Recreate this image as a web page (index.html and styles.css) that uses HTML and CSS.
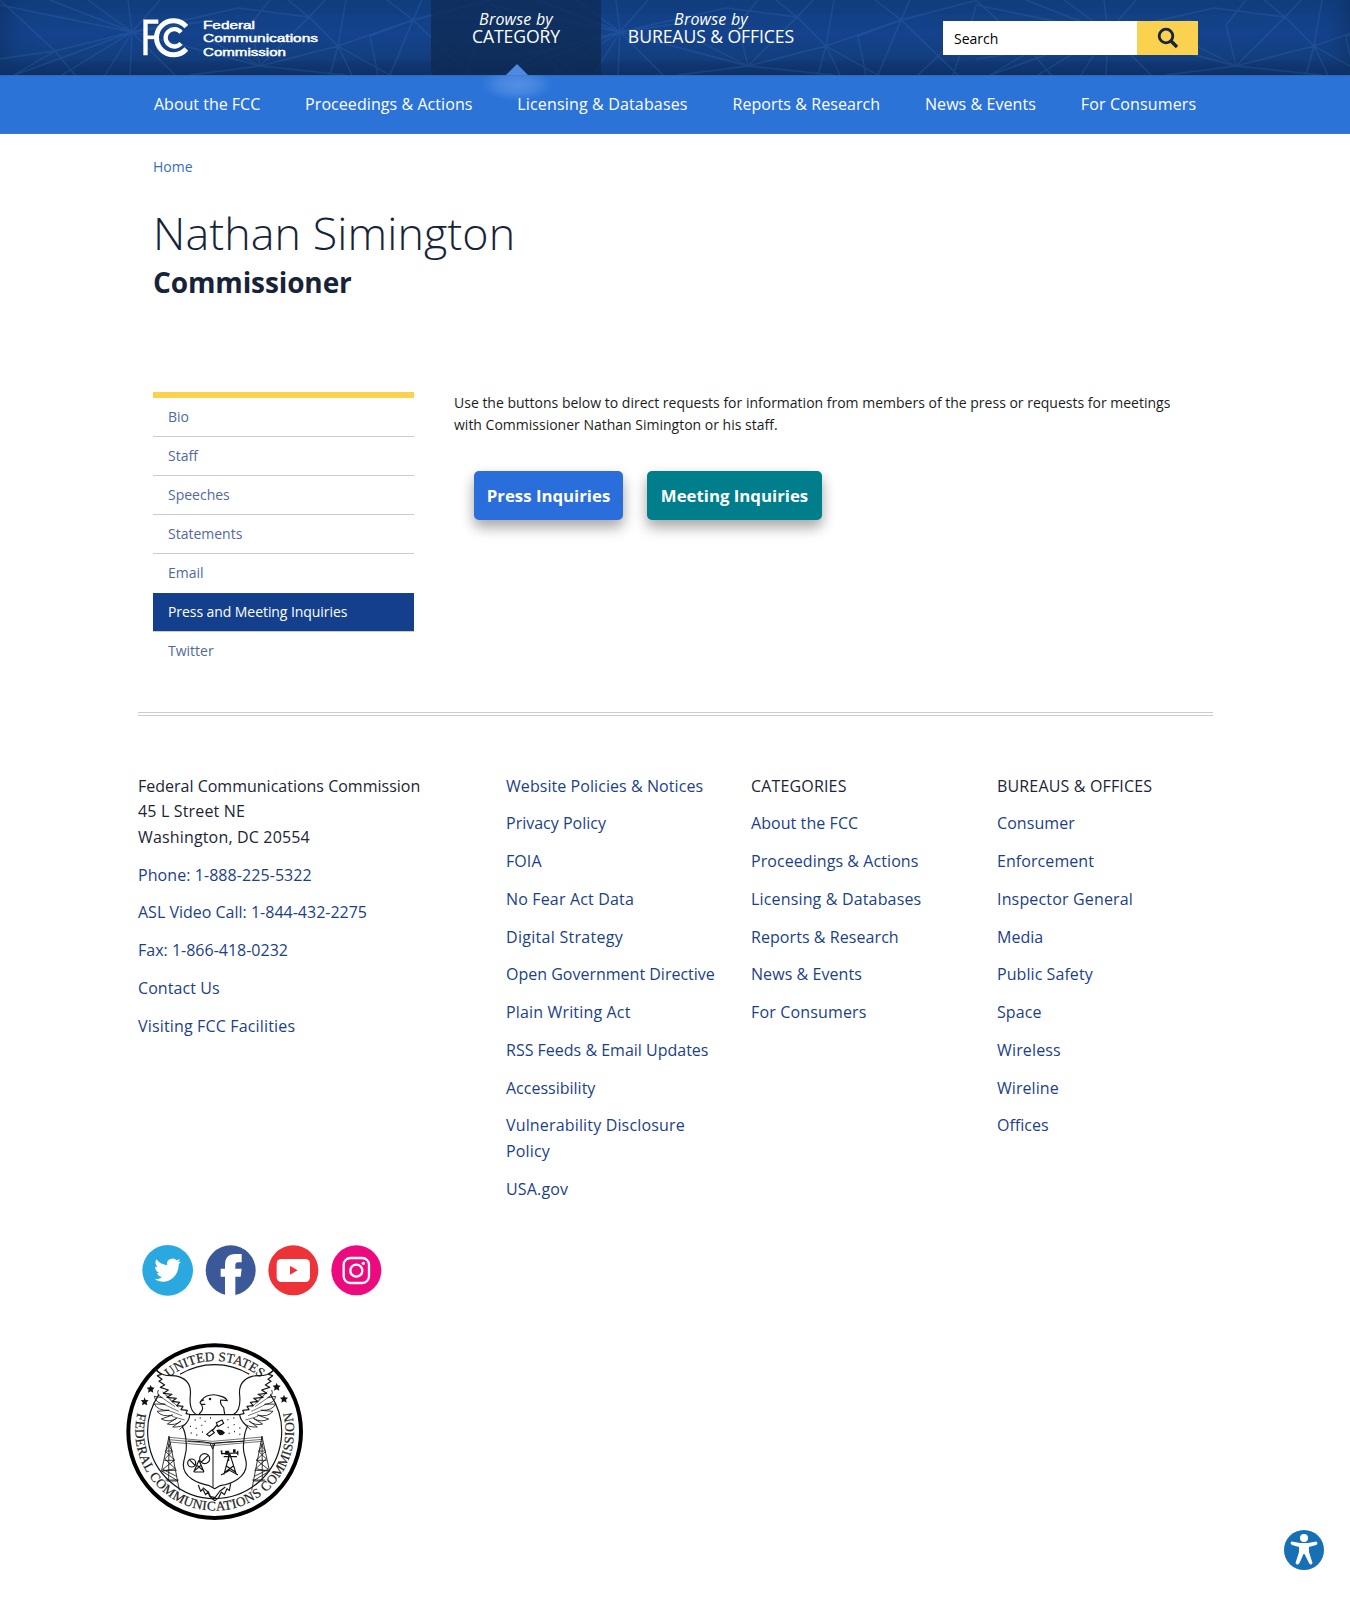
FILE: index.html
```
<!DOCTYPE html>
<html lang="en">
<head>
<meta charset="utf-8">
<title>Nathan Simington | Federal Communications Commission</title>
<link rel="stylesheet" href="styles.css">
</head>
<body>
<header class="masthead">
  <svg class="mesh" width="1350" height="75" aria-hidden="true">
    <defs>
      <pattern id="web" width="488" height="75" patternUnits="userSpaceOnUse">
        <path d="M132 32L0 5M132 32L55 51L-8 60M132 32L50 0M132 32L88 0M132 32L128 0M132 32L160 0M132 32L15 75M132 32L62 75M132 32L105 75M132 32L130 75M132 32L175 75M132 32L260 66M132 32L238 8L309 17M132 32L215 20M0 0L55 51L75 75M55 51L14 75M260 66L190 75M260 66L205 38M260 66L250 25L270 0M260 66L309 17L288 0M260 66L338 46M260 66L345 75M309 17L325 0M309 17L338 46L413 20L490 0M338 46L330 75M338 46L352 75M338 46L346 0M338 46L390 75M413 20L387 0M413 20L422 0M413 20L390 75M413 20L370 36L378 75M413 20L470 75M490 0L482 26L430 75M482 26L465 75" fill="none" stroke="#4c8bd0" stroke-width="1.4" opacity=".17"/>
      </pattern>
    </defs>
    <rect width="1350" height="75" fill="url(#web)"/>
  </svg>
  <div class="masthead-inner">
    <svg class="logo" width="184" height="60" viewBox="410 0 552 180" role="img" aria-label="FCC">
      <g fill="none" stroke="#fff">
        <path d="M435.500 166V65H474" stroke-width="13"/>
        <path d="M436 112H468" stroke-width="11"/>
        <path d="M558 80A51 51 0 1 0 558 147" stroke-width="15"/>
        <path d="M542 97A26 26 0 1 0 542 130" stroke-width="13"/>
      </g>
      <g class="logo-text">
        <text x="608" y="86" textLength="156" lengthAdjust="spacingAndGlyphs">Federal</text>
        <text x="608" y="127" textLength="345" lengthAdjust="spacingAndGlyphs">Communications</text>
        <text x="608" y="167" textLength="249" lengthAdjust="spacingAndGlyphs">Commission</text>
      </g>
    </svg>
    <div class="tabs">
      <a class="tab tab-active"><em>Browse by</em><span>CATEGORY</span></a>
      <a class="tab"><em>Browse by</em><span>BUREAUS &amp; OFFICES</span></a>
    </div>
    <form class="search">
      <div class="search-field">Search</div>
      <div class="search-button">
        <svg width="24" height="24" viewBox="0 0 24 24"><circle cx="10" cy="10" r="6.800" fill="none" stroke="#172338" stroke-width="2.800"/><path d="M14.500 14.500L21 21" stroke="#172338" stroke-width="3.400"/></svg>
      </div>
    </form>
  </div>
</header>
<nav class="nav">
  <a>About the FCC</a><a class="loose">Proceedings &amp; Actions</a><a class="looser">Licensing &amp; Databases</a><a class="loose">Reports &amp; Research</a><a class="loose">News &amp; Events</a><a class="looser">For Consumers</a>
</nav>
<main class="page">
  <a class="crumb">Home</a>
  <h1>Nathan Simington</h1>
  <h2>Commissioner</h2>
  <div class="columns">
    <ul class="side">
      <li>Bio</li><li>Staff</li><li>Speeches</li><li>Statements</li><li>Email</li><li class="current">Press and Meeting Inquiries</li><li>Twitter</li>
    </ul>
    <section class="content">
      <p>Use the buttons below to direct requests for information from members of the press or requests for meetings<br>with Commissioner Nathan Simington or his staff.</p>
      <div class="buttons"><a class="btn">Press Inquiries</a><a class="btn btn-teal">Meeting Inquiries</a></div>
    </section>
  </div>
</main>
<footer class="footer">
  <div class="footer-grid">
    <ul>
      <li class="plain">Federal Communications Commission<br><span class="looser">45 L Street NE<br>Washington, DC 20554</span></li>
      <li class="loose">Phone: 1-888-225-5322</li><li>ASL Video Call: 1-844-432-2275</li><li>Fax: 1-866-418-0232</li><li class="loose">Contact Us</li><li class="looser">Visiting FCC Facilities</li>
    </ul>
    <ul>
      <li class="loose">Website Policies &amp; Notices</li><li>Privacy Policy</li><li class="loose">FOIA</li><li class="looser">No Fear Act Data</li><li class="loosest">Digital Strategy</li><li>Open Government Directive</li><li class="looser">Plain Writing Act</li><li>RSS Feeds &amp; Email Updates</li><li>Accessibility</li><li class="looser">Vulnerability Disclosure<br>Policy</li><li class="looser">USA.gov</li>
    </ul>
    <ul>
      <li class="plain looser">CATEGORIES</li><li class="loose">About the FCC</li><li class="loose">Proceedings &amp; Actions</li><li class="looser">Licensing &amp; Databases</li><li class="loose">Reports &amp; Research</li><li class="loose">News &amp; Events</li><li class="looser">For Consumers</li>
    </ul>
    <ul>
      <li class="plain looser">BUREAUS &amp; OFFICES</li><li class="loose">Consumer</li><li class="loose">Enforcement</li><li class="looser">Inspector General</li><li>Media</li><li class="loose">Public Safety</li><li class="loose">Space</li><li class="looser">Wireless</li><li class="loose">Wireline</li><li>Offices</li>
    </ul>
  </div>
  <div class="social">
    <svg width="52" height="52" viewBox="36 45 156 156"><circle cx="113" cy="121" r="76" fill="#29a9e0"/><path d="M74 148Q87 149 96 141Q84 139 81 129H88Q76 124 75 110L83 112Q72 101 79 88Q92 104 112 106Q108 88 126 86Q134 85 140 91L150 87L145 96L153 95L146 103C147 139 111 170 74 148Z" fill="#fff"/></svg>
    <svg width="52" height="52" viewBox="225 45 156 156"><circle cx="302" cy="121" r="75" fill="#3b5998"/><path d="M285 197V140H272V116H285V104Q285 72 316 72H335V97H324Q316 97 316 106V116H335L332 140H316V197Z" fill="#fff"/></svg>
    <svg width="52" height="52" viewBox="414 45 156 156"><circle cx="490" cy="121" r="75" fill="#ee3338"/><rect x="440" y="87" width="100" height="69" rx="14" fill="#fff"/><path d="M480 108L503 121L480 134Z" fill="#ee3338"/></svg>
    <svg width="52" height="52" viewBox="603 45 156 156"><circle cx="679" cy="121" r="75" fill="#ed0a7f"/><g fill="none" stroke="#fff" stroke-width="7"><rect x="641" y="84" width="76" height="75" rx="20"/><circle cx="679" cy="122" r="18"/></g><circle cx="700" cy="100" r="5" fill="#fff"/></svg>
  </div>
  <svg class="seal" width="190" height="190" viewBox="0 0 570 570" role="img" aria-label="Seal">
    <defs>
      <path id="arc-top" d="M72 290A212 212 0 0 1 496 290"/>
      <path id="arc-bottom" d="M68 189A238 238 0 1 0 500 189"/>
    </defs>
    <circle cx="284" cy="290" r="259" fill="#fff" stroke="#000" stroke-width="12"/>
    <path d="M180 118A201 201 0 0 1 388 118M117 178A201 201 0 1 0 451 178" fill="none" stroke="#111" stroke-width="3.500"/>
    <g class="seal-text">
      <text textLength="300"><textPath href="#arc-top" startOffset="183">UNITED STATES</textPath></text>
      <text textLength="862"><textPath href="#arc-bottom" startOffset="47">FEDERAL COMMUNICATIONS COMMISSION</textPath></text>
    </g>
    <g fill="#111">
      <path id="star" d="M92 149L95 157L104 158L98 164L100 173L92 169L84 173L86 164L80 158L89 157Z"/>
      <use href="#star" x="-18" y="38"/><use href="#star" x="378" y="-6"/><use href="#star" x="400" y="30"/>
    </g>
    <g fill="none" stroke="#161616" stroke-width="3.500" stroke-linejoin="round">
      <g id="wing">
        <path d="M105 102C130 130 155 118 174 124C207 134 214 155 211 181C208 211 215 232 231 239"/>
        <path d="M105 102L124 118L112 122L126 133L117 139L134 150L121 157L145 165L130 175L156 178L141 187L169 190L157 199L179 202L170 212L189 214L183 224L202 226L198 236L218 240L213 252L224 260"/>
        <path d="M115 165Q108 180 127 188L103 184Q106 205 136 208L103 207Q112 227 147 226L111 229Q127 248 158 240L124 252Q146 264 170 250L142 267Q165 273 183 258L158 276Q184 278 200 264L178 284" stroke-width="2.500"/>
        <path d="M126 188L165 215M132 208L176 229M145 226L186 242M156 244L194 255M128 170L160 205M139 180L175 217" stroke-width="1.800"/>
      </g>
      <use href="#wing" transform="matrix(-1 0 0 1 570 0)"/>
      <path d="M237 237C253 223 249 214 240 203C252 178 281 175 304 184Q318 188 322 197L302 195Q299 207 311 218L314 238M240 200L252 194M244 208H256"/><circle cx="270" cy="192" r="2"/>
      <path d="M209 239H359C361 258 374 267 382 275C370 297 373 313 370 335C370 360 379 370 379 388C379 427 336 447 300 452L284 461L268 452C232 445 190 427 190 389C192 365 201 352 199 332C198 309 198 293 187 275C199 266 209 257 209 239Z" fill="#fff"/>
      <path d="M203 318Q245 318 277 325Q322 320 370 319M279 325V458M270 325L278 342L285 325" stroke-width="3"/>
      <path d="M147 307L277 319L427 306M147 314L277 326L427 313M147 321L277 332L427 319" stroke-width="1.800"/>
      <g id="tower"><path d="M147 304L124 410M147 304L178 466M147 304L146 435M143 325L157 349L134 372L166 401L126 409L174 438L140 438M152 325L136 349L164 375L128 403L170 424M140 348H157M133 376H164M127 406H170M137 435H176" stroke-width="2.500"/></g>
      <use href="#tower" transform="matrix(-1 0 0 1 573 0)"/>
      <path d="M235 450L242 469L248 462L257 479L265 470L273 489L285 497L296 488L304 471L313 479L321 461L328 467L332 446M249 458L264 471L269 484L285 488L300 468L316 456"/>
    </g>
    <g fill="none" stroke="#111" stroke-width="3.500">
      <circle cx="215" cy="384" r="12"/><circle cx="254" cy="371" r="15"/><path d="M208 374L226 392M244 381L264 362M237 376L221 411M237 376L252 411M231 391L248 405M244 390L225 406M222 411H252"/>
      <path d="M329 355L312 418M329 355L349 418M303 356L355 354M311 365H351M326 347V378M319 393L345 410M340 393L316 411M303 420L329 406L354 420"/>
      <path d="M289 263L306 255L311 265L294 275ZM260 298L276 285L283 293L268 304ZM292 269L276 288"/>
    </g>
    <path d="M303 353Q299 346 307 346V361ZM355 346V362Q344 354 355 346ZM316 347H324V359H314ZM339 343H347V353H339ZM289 285Q299 312 315 293Q305 280 289 285Z" fill="#111"/>
    <path d="M224 255h3M239 249h3M254 259h3M270 249h3M322 254h3M340 249h3M210 274h3M227 280h3M244 271h3M212 294h3M229 300h3M246 291h3M323 277h3M341 269h3M358 279h3M326 295h3M342 290h3M358 298h3" stroke="#222" stroke-width="4"/>
  </svg>
</footer>
<svg class="access" width="42" height="42" viewBox="0 0 42 42" role="img" aria-label="Accessibility options"><circle cx="21" cy="21" r="20" fill="#1870b4"/><circle cx="21" cy="9" r="4" fill="#fff"/><path d="M8.500 12.500L17 14H25L33.500 12.500Q35.500 15 33 16L26 18V23L29.500 34Q28 37 26 34L21.500 25H20.500L16.500 34Q14 37 12.500 34L16 23V18L9 16Q6.500 14 8.500 12.500Z" fill="#fff"/></svg>
</body>
</html>
```
FILE: styles.css
```
* { box-sizing: border-box; }
body { margin: 0; min-height: 1601px; background: #fff; color: #1c1c1c; font-family: "Open Sans", sans-serif; font-size: 14px; }
ul { list-style: none; margin: 0; padding: 0; }
.loose { letter-spacing: .07px; }
.looser { letter-spacing: .16px; }
.loosest { letter-spacing: .28px; }
.masthead { position: relative; height: 75px; background: linear-gradient(#123f80 0, #14428c 45%, #133f80 75%, #103165 100%); box-shadow: inset 20px 0 25px -15px #0f3469, inset -20px 0 25px -15px #0f3469; }
.mesh { position: absolute; left: 0; top: 0; }
.masthead-inner { position: relative; display: flex; height: 75px; padding-left: 137px; }
.logo { flex: none; }
.logo-text { fill: #fff; stroke: #fff; stroke-width: 1.3px; font-family: "Liberation Sans", sans-serif; font-size: 33px; }
.tabs { display: flex; margin-left: 110px; }
.tab { position: relative; display: flex; flex-direction: column; align-items: center; width: 170px; height: 75px; padding-top: 10px; color: #fff; line-height: 17px; white-space: nowrap; }
.tab + .tab { width: 220px; }
.tab em { font-size: 16px; line-height: 18px; letter-spacing: .2px; }
.tab span { font-size: 17.6px; line-height: 17px; letter-spacing: -.08px; }
.tab-active { background: linear-gradient(rgba(14, 41, 83, .7), rgba(13, 42, 82, .85)); }
.tab-active::before { content: ""; position: absolute; z-index: 1; left: 50px; top: 68px; width: 72px; height: 33px; background: radial-gradient(closest-side, rgba(110, 162, 235, .6), rgba(110, 162, 235, .4) 50%, transparent); clip-path: inset(7px 0 0); }
.tab-active::after { content: ""; position: absolute; left: 75px; top: 64px; border: solid transparent; border-width: 0 11px 11px; border-bottom-color: #4d8be3; }
.search { display: flex; margin: 21px 0 0 122px; height: 34px; }
.search-field { width: 194px; padding: 0 11px; background: #fff; color: #000; font-size: 14px; line-height: 35px; }
.search-button { display: flex; align-items: center; justify-content: center; width: 61px; background: #fbd24f; }
.nav { display: flex; gap: 44.8px; height: 59px; padding-left: 154px; background: #2b73d7; border-top: 1px solid #2d68bb; border-bottom: 1px solid #3b78cc; color: #fff; font-size: 16px; line-height: 57px; white-space: nowrap; }
.page { width: 1044px; margin: 0 auto; height: 578px; padding-top: 22px; }
.crumb { display: block; height: 22px; color: #3a6dbb; font-size: 14px; line-height: 22px; }
h1 { margin: 24px 0 0; height: 62px; color: #172338; font-size: 44.8px; font-weight: 300; line-height: 61px; letter-spacing: .08px; white-space: nowrap; }
h2 { margin: 0; height: 36px; color: #172338; font-size: 28px; font-weight: 700; line-height: 36px; letter-spacing: -.12px; }
.columns { display: flex; gap: 40px; margin-top: 92px; }
.side { flex: none; width: 261px; border-top: 6px solid #fbd24f; }
.side li { height: 39px; padding-left: 15px; border-bottom: 1px solid #ccc; color: #52699b; line-height: 38px; }
.side li:nth-child(5), .side li:last-child { border-bottom-color: transparent; }
.side .current { background: #143f8c; color: #fff; letter-spacing: -.07px; }
.content p { margin: 0; line-height: 22.4px; white-space: nowrap; }
.buttons { display: flex; gap: 24px; margin: 34px 0 0 20px; }
.btn { width: 149px; height: 49px; border-radius: 5px; background: #2a6edb; box-shadow: 0 8px 16px rgba(0, 0, 0, .2), 0 6px 12px rgba(0, 0, 0, .19); color: #fff; font-size: 16.8px; font-weight: 700; line-height: 49px; text-align: center; white-space: nowrap; }
.btn-teal { width: 175px; background: #007e8b; }
.footer { width: 1075px; margin: 0 auto; border-top: 4px double #ccc; padding-top: 57.7px; }
.footer-grid { display: grid; grid-template-columns: 368px 245px 246px 215.5px; padding-left: .5px; height: 472.3px; color: #1c3f88; font-size: 16px; line-height: 25.6px; white-space: nowrap; }
.footer li { margin-bottom: 12.17px; }
.footer .plain { color: #1d2436; }
.social { display: flex; gap: 11px; margin: -1px 0 0 4.2px; height: 89px; }
.seal { display: block; margin: 1.4px 0 0 -18px; }
.seal-text { fill: #222; stroke: #222; stroke-width: .6px; font-family: "Liberation Serif", serif; font-size: 40px; }
.access { position: fixed; left: 1283px; top: 1529px; }
```
